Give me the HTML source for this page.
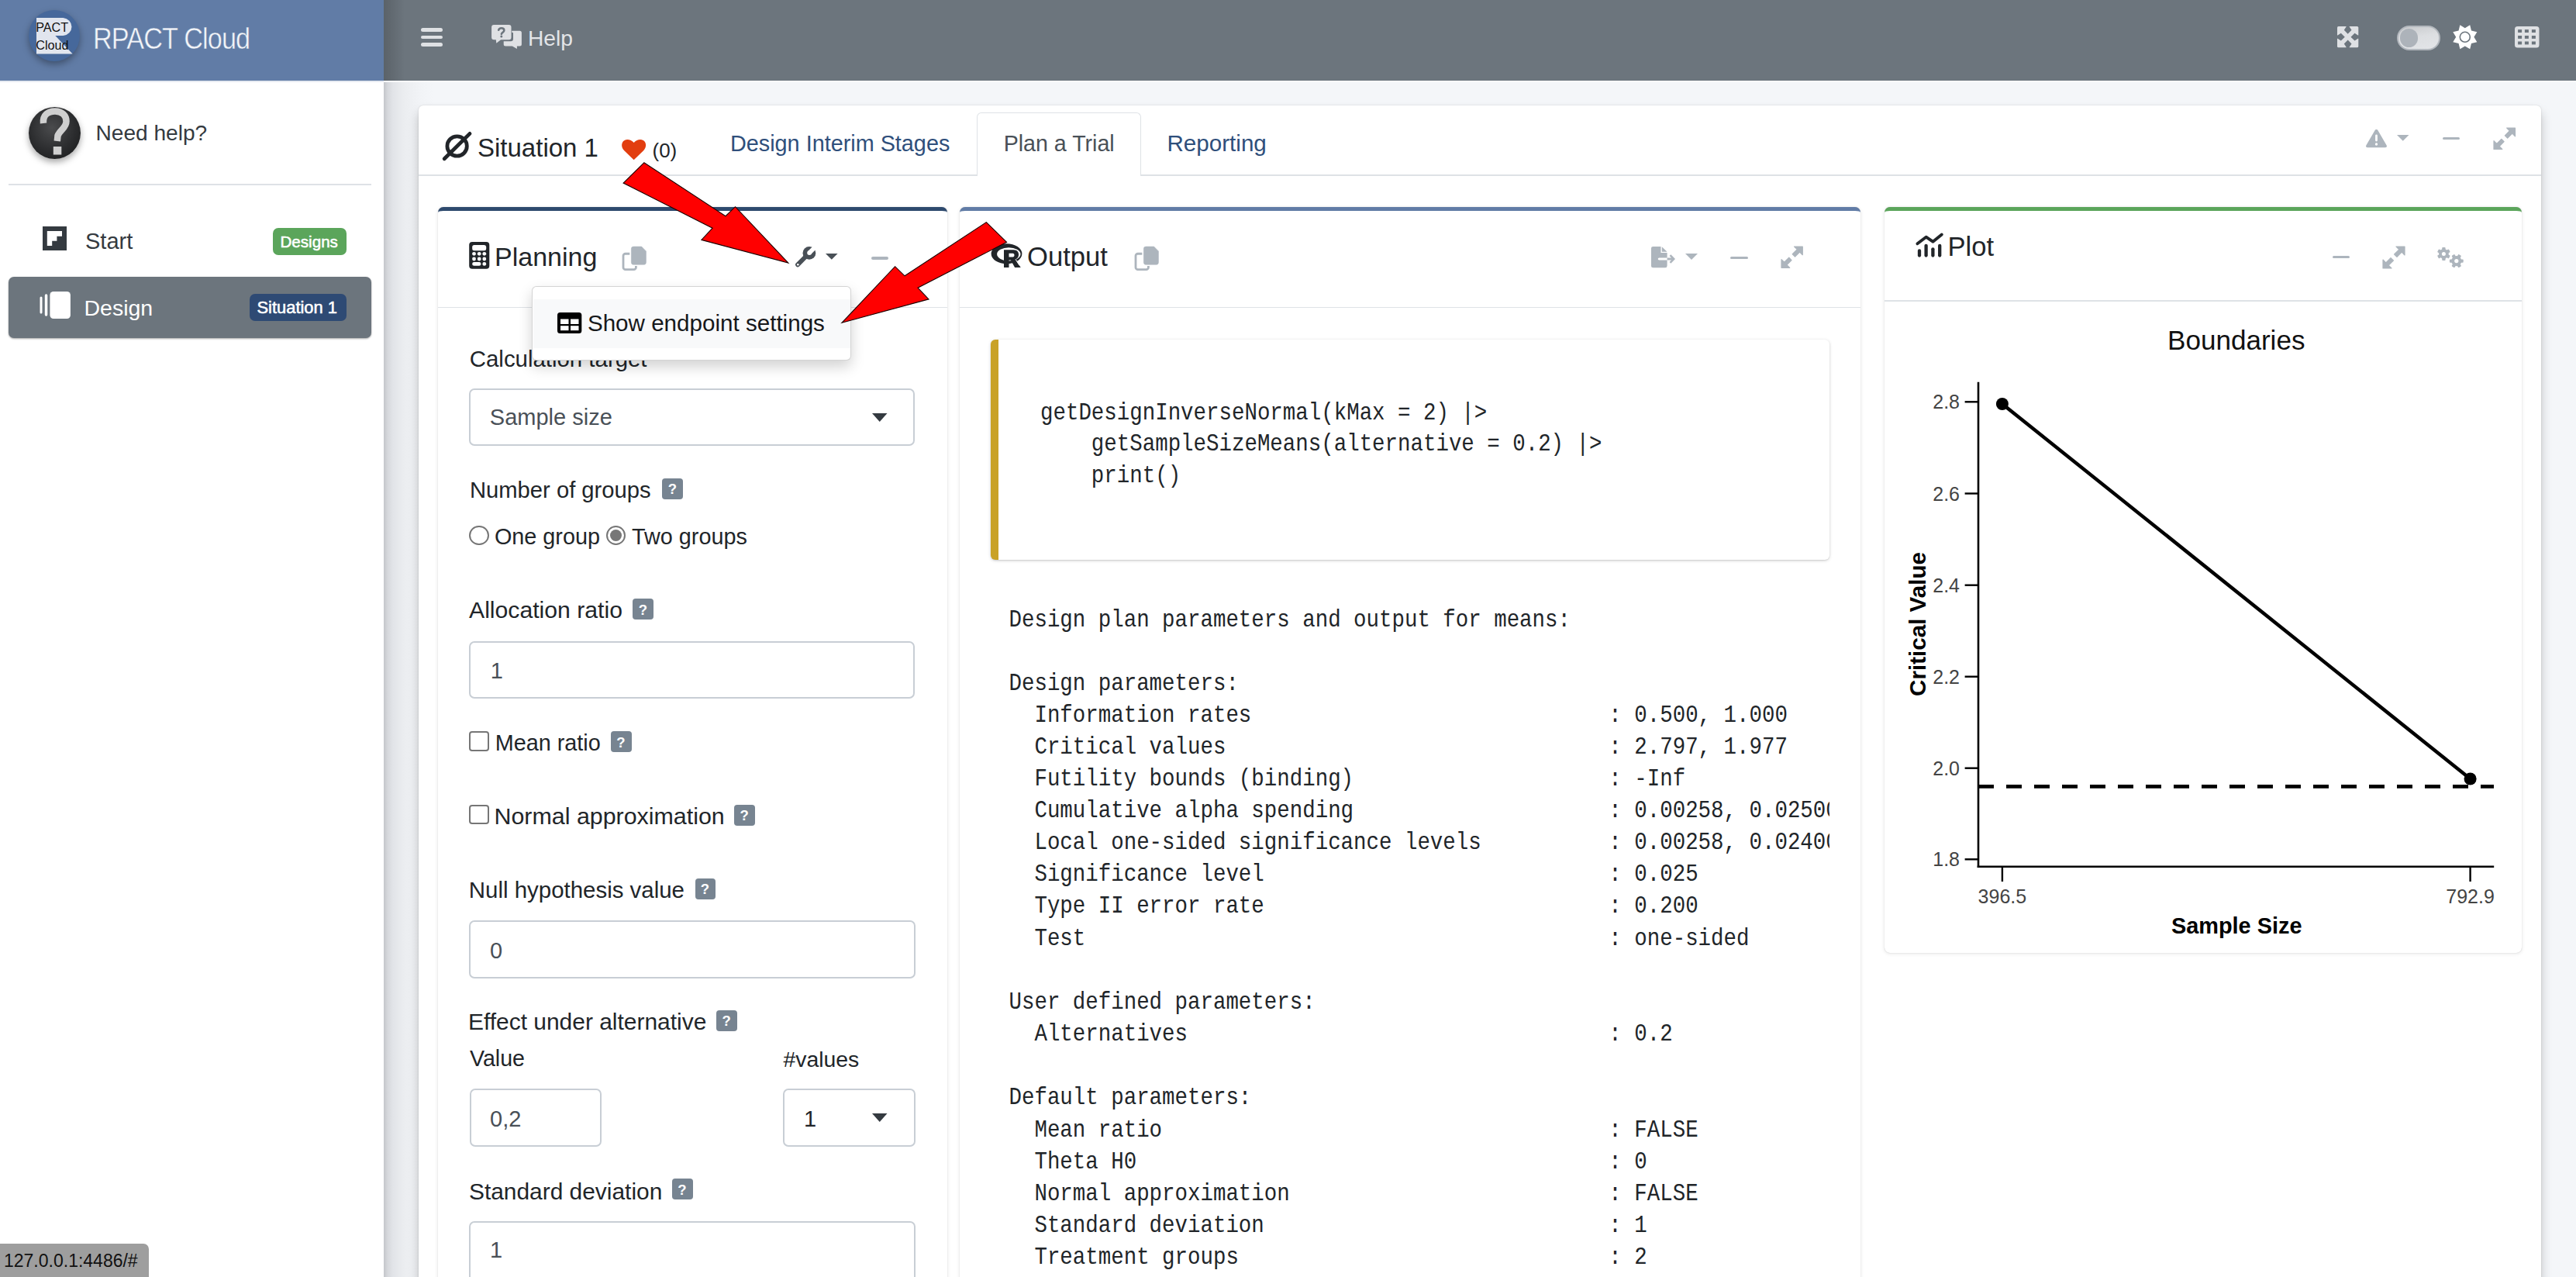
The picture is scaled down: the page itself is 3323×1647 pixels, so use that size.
<!DOCTYPE html>
<html><head><meta charset="utf-8"><title>RPACT Cloud</title>
<style>
html,body{margin:0;padding:0;width:3323px;height:1647px;overflow:hidden;background:#f4f6f9;font-family:"Liberation Sans",sans-serif;}
.t{position:absolute;line-height:1;white-space:nowrap;}
.r{position:absolute;box-sizing:border-box;}
svg.r{overflow:visible;}
pre{margin:0;}
</style></head><body>

<div class="r" style="left:495.0px;top:104.0px;width:65.0px;height:1543.0px;background:linear-gradient(to right,#c4c6ca 0px,#d6d8dc 5px,#e2e4e8 12px,#eaecef 24px,#eff1f4 38px,#f2f4f7 50px,#f4f6f9 65px)"></div>
<div class="r" style="left:495.0px;top:104.0px;width:2828.0px;height:2.0px;background:#fafbfc"></div>
<div class="r" style="left:495.0px;top:0.0px;width:2828.0px;height:104.0px;background:#6c757d"></div>
<div class="r" style="left:495.0px;top:0.0px;width:27.0px;height:104.0px;background:linear-gradient(to right,rgba(0,0,0,.16),rgba(0,0,0,0))"></div>
<div class="r" style="left:543.0px;top:36.0px;width:27.5px;height:4.5px;background:#dfe1e4;border-radius:2.5px"></div>
<div class="r" style="left:543.0px;top:45.5px;width:27.5px;height:4.5px;background:#dfe1e4;border-radius:2.5px"></div>
<div class="r" style="left:543.0px;top:55.0px;width:27.5px;height:4.5px;background:#dfe1e4;border-radius:2.5px"></div>
<svg class="r" style="left:630.0px;top:28.0px;width:48.0px;height:38.0px;" viewBox="630 28 48 38">
<path d="M652.5 39.8H670.4A2.5 2.5 0 0 1 672.9 42.3V56.9A2.5 2.5 0 0 1 670.4 59.4H666.9V62.9L660.8 59.4H652.2A2.5 2.5 0 0 1 649.7 56.9V53.2H659A3 3 0 0 0 662 50.2V42.3z" fill="#dfe1e4"/>
<path d="M659.5 39.8H661.3" stroke="#6c757d" stroke-width="0"/>
<path d="M637.1 31.9H656.5A3 3 0 0 1 659.5 34.9V48.3A3 3 0 0 1 656.5 51.3H646.1L640.3 55.7L639.8 51.3H637.1A3 3 0 0 1 634.1 48.3V34.9A3 3 0 0 1 637.1 31.9z" fill="#dfe1e4" stroke="#6c757d" stroke-width="1.6" paint-order="stroke"/>
<path d="M643.2 38.8C643.6 37.1 645 36.3 646.8 36.3C648.8 36.3 650.3 37.5 650.3 39.2C650.3 41.4 647.2 41.9 646.9 43.9" fill="none" stroke="#6c757d" stroke-width="2.6" stroke-linecap="round"/>
<circle cx="646.8" cy="47.1" r="1.5" fill="#6c757d"/>
</svg>
<div class="t" style="left:681.0px;top:34.8px;font-size:28.2px;color:#e3e5e8;font-weight:400;font-family:'Liberation Sans', sans-serif;">Help</div>
<svg class="r" style="left:3015.0px;top:34.0px;width:27.3px;height:27.3px;" viewBox="0 0 27.3 27.3"><rect x="0" y="0" width="27.3" height="27.3" rx="1.6" fill="#dfe1e4"/><g transform="rotate(0 13.65 13.65)"><polygon points="11.6,-1 11.6,0.6 8.8,4.8 13.65,9.8 18.5,4.8 15.7,0.6 15.7,-1" fill="#6c757d"/></g><g transform="rotate(90 13.65 13.65)"><polygon points="11.6,-1 11.6,0.6 8.8,4.8 13.65,9.8 18.5,4.8 15.7,0.6 15.7,-1" fill="#6c757d"/></g><g transform="rotate(180 13.65 13.65)"><polygon points="11.6,-1 11.6,0.6 8.8,4.8 13.65,9.8 18.5,4.8 15.7,0.6 15.7,-1" fill="#6c757d"/></g><g transform="rotate(270 13.65 13.65)"><polygon points="11.6,-1 11.6,0.6 8.8,4.8 13.65,9.8 18.5,4.8 15.7,0.6 15.7,-1" fill="#6c757d"/></g></svg>
<div class="r" style="left:3092.0px;top:33.0px;width:55.6px;height:31.8px;background:linear-gradient(170deg,#c8cacd 0%,#dcdee1 45%,#e3e5e8 100%);border:2px solid #b3b8be;border-radius:16px"></div>
<div class="r" style="left:3096.2px;top:37.4px;width:23.2px;height:23.2px;background:#adb3ba;border-radius:50%"></div>
<svg class="r" style="left:3162.7px;top:30.8px;width:33.6px;height:33.6px;" viewBox="0 0 33.6 33.6"><polygon points="16.80,5.20 23.23,1.28 25.00,8.60 32.32,10.37 28.40,16.80 32.32,23.23 25.00,25.00 23.23,32.32 16.80,28.40 10.37,32.32 8.60,25.00 1.28,23.23 5.20,16.80 1.28,10.37 8.60,8.60 10.37,1.28" fill="#ffffff"/><circle cx="16.8" cy="16.8" r="7.3" fill="#6c757d"/><circle cx="16.8" cy="16.8" r="5.7" fill="#ffffff"/></svg>
<svg class="r" style="left:3244.0px;top:34.0px;width:31.5px;height:27.5px;" viewBox="0 0 31.5 27.5">
<rect x="0" y="0" width="31.5" height="27.5" rx="3.5" fill="#dfe1e4"/>
<rect x="4.1" y="4.1" width="5" height="3.9" fill="#6c757d"/><rect x="4.1" y="12" width="5" height="3.9" fill="#6c757d"/><rect x="4.1" y="19.5" width="5" height="3.9" fill="#6c757d"/><rect x="12.9" y="4.1" width="5" height="3.9" fill="#6c757d"/><rect x="12.9" y="12" width="5" height="3.9" fill="#6c757d"/><rect x="12.9" y="19.5" width="5" height="3.9" fill="#6c757d"/><rect x="21.9" y="4.1" width="5" height="3.9" fill="#6c757d"/><rect x="21.9" y="12" width="5" height="3.9" fill="#6c757d"/><rect x="21.9" y="19.5" width="5" height="3.9" fill="#6c757d"/></svg>
<div class="r" style="left:0.0px;top:0.0px;width:495.0px;height:1647.0px;background:#ffffff"></div>
<div class="r" style="left:0.0px;top:0.0px;width:495.0px;height:104.0px;background:#617ca6"></div>
<div class="r" style="left:0.0px;top:104.0px;width:495.0px;height:2.0px;background:#e7ebf1"></div>
<div class="r" style="left:37.0px;top:13.0px;width:66.0px;height:66.0px;background:#46689b;border-radius:50%;box-shadow:0 4px 10px rgba(0,0,0,.35)"></div>
<svg class="r" style="left:46.6px;top:22.7px;width:46.6px;height:46.6px;" viewBox="0 0 46.6 46.6">
<path d="M0 0H34.5A12.1 11.6 0 0 1 34.5 23.1H24.3L46.6 46.6H0z" fill="#e1e5ee"/>
</svg>
<div class="t" style="left:46.2px;top:26.5px;font-size:16.2px;color:#111;font-weight:400;font-family:'Liberation Sans', sans-serif;">PACT</div>
<div class="t" style="left:46.2px;top:49.5px;font-size:16.2px;color:#111;font-weight:400;font-family:'Liberation Sans', sans-serif;">Cloud</div>
<div class="t" style="left:119.5px;top:30.9px;font-size:38.5px;color:#f3f5f9;font-weight:400;font-family:'Liberation Sans', sans-serif;letter-spacing:-1px;transform:scaleX(0.89);transform-origin:0 0;-webkit-text-stroke:0.5px #617ca6">RPACT Cloud</div>
<div class="r" style="left:37.0px;top:138.0px;width:67.0px;height:67.0px;background:radial-gradient(circle at 45% 40%,#4a4b4d 0%,#2b2c2e 55%,#151617 100%);border-radius:50%;box-shadow:0 4px 9px rgba(0,0,0,.35)"></div>
<svg class="r" style="left:0.0px;top:0.0px;width:120.0px;height:220.0px;" viewBox="0 0 120 220"><path d="M56 159C55 148 62 143.5 71 143.5C80 143.5 85.5 149 85.5 156.5C85.5 165 77 168 74.5 175L73.8 182" fill="none" stroke="#cfcfcf" stroke-width="8.5" stroke-linecap="butt"/><rect x="68.8" y="189" width="10.5" height="10.5" fill="#cfcfcf"/></svg>
<div class="t" style="left:123.5px;top:158.2px;font-size:28.1px;color:#343a40;font-weight:400;font-family:'Liberation Sans', sans-serif;">Need help?</div>
<div class="r" style="left:11.0px;top:237.0px;width:468.0px;height:2.0px;background:#dee2e6"></div>
<svg class="r" style="left:55.0px;top:292.0px;width:31.0px;height:31.0px;" viewBox="0 0 31 31"><rect width="31" height="31" fill="#343a40"/><path d="M5.8 6.1H25V12.7H18.4V18.7H12.2V25H5.8z" fill="#fff"/></svg>
<div class="t" style="left:110.0px;top:296.9px;font-size:29px;color:#343a40;font-weight:400;font-family:'Liberation Sans', sans-serif;">Start</div>
<div class="r" style="left:352.0px;top:294.0px;width:95.0px;height:35.0px;background:#5ba55b;border-radius:7px"></div>
<div class="t" style="left:361.5px;top:302.1px;font-size:20.6px;color:#ffffff;font-weight:400;font-family:'Liberation Sans', sans-serif;-webkit-text-stroke:0.55px #fff">Designs</div>
<div class="r" style="left:11.0px;top:357.0px;width:468.0px;height:79.0px;background:#6c757d;border-radius:7px;box-shadow:0 1px 3px rgba(0,0,0,.12),0 1px 2px rgba(0,0,0,.24)"></div>
<svg class="r" style="left:50.5px;top:376.0px;width:40.0px;height:35.0px;" viewBox="0 0 40 35"><rect x=".5" y="6.5" width="3" height="22" rx="1.5" fill="#fff"/><rect x="6.8" y="3.2" width="3.5" height="28.5" rx="1.7" fill="#fff"/><rect x="13.4" y="0" width="26.5" height="35" rx="4.5" fill="#fff"/></svg>
<div class="t" style="left:108.5px;top:382.5px;font-size:28.5px;color:#ffffff;font-weight:400;font-family:'Liberation Sans', sans-serif;">Design</div>
<div class="r" style="left:322.0px;top:379.0px;width:125.0px;height:34.5px;background:#2e4a74;border-radius:7px"></div>
<div class="t" style="left:331.5px;top:385.5px;font-size:21.9px;color:#ffffff;font-weight:400;font-family:'Liberation Sans', sans-serif;-webkit-text-stroke:0.55px #fff">Situation 1</div>
<div class="r" style="left:0.0px;top:1604.0px;width:192.0px;height:43.0px;background:#9e9e9e;border-top-right-radius:7px"></div>
<div class="t" style="left:5.0px;top:1615.3px;font-size:23px;color:#111;font-weight:400;font-family:'Liberation Sans', sans-serif;">127.0.0.1:4486/#</div>
<div class="r" style="left:540.0px;top:136.0px;width:2738.0px;height:1564.0px;background:#fff;border-radius:6px;box-shadow:0 0 2px rgba(0,0,0,.16),0 9px 14px rgba(0,0,0,.22)"></div>
<div class="r" style="left:540.0px;top:225.0px;width:2738.0px;height:2.0px;background:#dee2e6"></div>
<svg class="r" style="left:570.0px;top:170.0px;width:40.0px;height:40.0px;" viewBox="0 0 40 40"><circle cx="19.6" cy="18.5" r="12.7" fill="none" stroke="#212529" stroke-width="4.8"/><line x1="3.2" y1="34.7" x2="36" y2="2.4" stroke="#212529" stroke-width="4.8" stroke-linecap="round"/></svg>
<div class="t" style="left:616.0px;top:173.7px;font-size:33px;color:#212529;font-weight:400;font-family:'Liberation Sans', sans-serif;">Situation 1</div>
<svg class="r" style="left:802.0px;top:180.2px;width:31.3px;height:26.2px;" viewBox="0 0 32 27"><path d="M16 27L3.2 14.6C-1.2 10.3-1 3.6 3.6 1 7.4-1.1 12.4.2 16 4.2 19.6.2 24.6-1.1 28.4 1c4.6 2.6 4.8 9.3.4 13.6z" fill="#e23e0f"/></svg>
<div class="t" style="left:841.5px;top:180.5px;font-size:26px;color:#212529;font-weight:400;font-family:'Liberation Sans', sans-serif;">(0)</div>
<div class="t" style="left:942.0px;top:171.1px;font-size:28.8px;color:#2f4f7b;font-weight:400;font-family:'Liberation Sans', sans-serif;">Design Interim Stages</div>
<div class="r" style="left:1260.0px;top:144.8px;width:211.5px;height:82.2px;background:#fff;border:1.5px solid #dee2e6;border-bottom:none;border-top-left-radius:6px;border-top-right-radius:6px"></div>
<div class="t" style="left:1294.7px;top:171.3px;font-size:28.6px;color:#495057;font-weight:400;font-family:'Liberation Sans', sans-serif;">Plan a Trial</div>
<div class="t" style="left:1505.5px;top:170.4px;font-size:29.6px;color:#2f4f7b;font-weight:400;font-family:'Liberation Sans', sans-serif;">Reporting</div>
<svg class="r" style="left:3052.0px;top:166.8px;width:27.0px;height:23.2px;" viewBox="0 0 27 23.2"><path d="M13.5 0c.9 0 1.6.5 2 1.2l11.2 19.2c.8 1.4-.2 2.8-1.8 2.8H2.1C.5 23.2-.5 21.8.3 20.4L11.5 1.2C11.9.5 12.6 0 13.5 0z" fill="#adb5bd"/><rect x="12.1" y="6.5" width="2.8" height="9" rx="1.4" fill="#fff"/><circle cx="13.5" cy="19" r="1.7" fill="#fff"/></svg>
<svg class="r" style="left:3092.4px;top:173.8px;width:15.5px;height:7.8px;" viewBox="0 0 15.5 7.8"><path d="M0 0h15.5l-7.75 7.8z" fill="#adb5bd"/></svg>
<div class="r" style="left:3151.0px;top:176.8px;width:22.0px;height:3.5px;background:#adb5bd;border-radius:2px"></div>
<svg class="r" style="left:3217.0px;top:165.0px;width:27.5px;height:27.5px;" viewBox="0 0 28 28"><path d="M17 0h11v11l-3.8-3.8-6.2 6.2-3.4-3.4 6.2-6.2zM11 28H0V17l3.8 3.8 6.2-6.2 3.4 3.4-6.2 6.2z" fill="#adb5bd" stroke="#adb5bd" stroke-width="1.2" stroke-linejoin="round"/></svg>
<div class="r" style="left:564.7px;top:267.0px;width:656.9px;height:1433.0px;background:#fff;border-top:5.5px solid #2e4a6e;border-radius:7px;box-shadow:0 0 1px rgba(0,0,0,.22),0 1px 5px rgba(0,0,0,.11)"></div>
<div class="r" style="left:564.7px;top:395.5px;width:656.9px;height:1.5px;background:#dee2e6"></div>
<svg class="r" style="left:605.0px;top:312.0px;width:26.3px;height:34.7px;" viewBox="0 0 26.3 34.7"><rect x="0.2" y="0" width="26.1" height="34.7" rx="4" fill="#212529"/><rect x="4.2" y="4" width="18" height="7.2" rx="2.5" fill="#fff"/><circle cx="6.5" cy="15.3" r="2.4" fill="#fff"/><circle cx="13.2" cy="15.3" r="2.4" fill="#fff"/><circle cx="19.8" cy="15.3" r="2.4" fill="#fff"/><circle cx="6.5" cy="22" r="2.4" fill="#fff"/><circle cx="13.2" cy="22" r="2.4" fill="#fff"/><circle cx="19.8" cy="22" r="2.4" fill="#fff"/><circle cx="19.8" cy="28.4" r="2.4" fill="#fff"/><rect x="4.2" y="26" width="11.3" height="4.8" rx="2.4" fill="#fff"/></svg>
<div class="t" style="left:638.0px;top:314.2px;font-size:34px;color:#212529;font-weight:400;font-family:'Liberation Sans', sans-serif;">Planning</div>
<svg class="r" style="left:801.6px;top:318.0px;width:32.0px;height:32.0px;" viewBox="0 0 32 32"><path d="M10.3 9.25H4.8A2.8 2.8 0 0 0 2 12.05V26.9A2.8 2.8 0 0 0 4.8 29.7H15.6A2.8 2.8 0 0 0 18.4 26.9V25.1" fill="none" stroke="#adb5bd" stroke-width="2.8"/><path d="M15.2 0.1H25.6L31.4 5.9V20.4A2.8 2.8 0 0 1 28.6 23.2H15.2A2.8 2.8 0 0 1 12.4 20.4V2.9A2.8 2.8 0 0 1 15.2 0.1z" fill="#adb5bd" stroke="#adb5bd" stroke-width=".6" stroke-linejoin="round"/></svg>
<svg class="r" style="left:1020.0px;top:312.0px;width:40.0px;height:40.0px;" viewBox="1020 312 40 40"><circle cx="1043.9" cy="326.4" r="8.4" fill="#495057"/><line x1="1042" y1="328.3" x2="1029" y2="341.4" stroke="#495057" stroke-width="5.8" stroke-linecap="round"/><rect x="1041.1" y="311" width="5.6" height="15.3" fill="#fff" transform="rotate(45 1043.9 326.3)"/><circle cx="1044.1" cy="326.1" r="2.9" fill="#fff"/><circle cx="1029.3" cy="341.2" r="1.3" fill="#fff"/></svg>
<svg class="r" style="left:1065.0px;top:327.0px;width:15.6px;height:7.8px;" viewBox="0 0 16 8"><path d="M0 0h16l-8 8z" fill="#495057"/></svg>
<div class="r" style="left:1124.0px;top:331.0px;width:22.0px;height:3.5px;background:#adb5bd;border-radius:2px"></div>
<div class="t" style="left:605.8px;top:447.5px;font-size:29.4px;color:#212529;font-weight:400;font-family:'Liberation Sans', sans-serif;">Calculation target</div>
<div class="r" style="left:605.3px;top:501.2px;width:575.2px;height:74.3px;background:#fff;border:2px solid #c8ced5;border-radius:7px"></div>
<div class="t" style="left:631.8px;top:524.4px;font-size:29px;color:#495057;font-weight:400;font-family:'Liberation Sans', sans-serif;">Sample size</div>
<svg class="r" style="left:1125.0px;top:532.6px;width:19.5px;height:11.0px;" viewBox="0 0 19.5 11"><path d="M0 0h19.5l-9.75 11z" fill="#343a40"/></svg>
<div class="t" style="left:606.0px;top:617.5px;font-size:29.2px;color:#212529;font-weight:400;font-family:'Liberation Sans', sans-serif;">Number of groups</div>
<div class="r" style="left:854.4px;top:617.0px;width:26.5px;height:26.8px;background:#778491;border-radius:4px"></div>
<div class="t" style="left:861.7px;top:622.4px;font-size:18.5px;color:#fff;font-weight:700;font-family:'Liberation Sans', sans-serif;">?</div>
<div class="r" style="left:605.4px;top:677.5px;width:25.4px;height:25.4px;background:#fff;border:2.5px solid #767676;border-radius:50%"></div>
<div class="t" style="left:637.9px;top:678.2px;font-size:28.8px;color:#212529;font-weight:400;font-family:'Liberation Sans', sans-serif;">One group</div>
<div class="r" style="left:781.6px;top:677.5px;width:25.4px;height:25.4px;background:#fff;border:2.5px solid #767676;border-radius:50%"></div>
<div class="r" style="left:786.8px;top:682.7px;width:15.0px;height:15.0px;background:#777;border-radius:50%"></div>
<div class="t" style="left:815.0px;top:678.2px;font-size:28.8px;color:#212529;font-weight:400;font-family:'Liberation Sans', sans-serif;">Two groups</div>
<div class="t" style="left:605.0px;top:772.1px;font-size:30.2px;color:#212529;font-weight:400;font-family:'Liberation Sans', sans-serif;">Allocation ratio</div>
<div class="r" style="left:816.4px;top:772.4px;width:26.5px;height:26.8px;background:#778491;border-radius:4px"></div>
<div class="t" style="left:823.7px;top:777.8px;font-size:18.5px;color:#fff;font-weight:700;font-family:'Liberation Sans', sans-serif;">?</div>
<div class="r" style="left:605.3px;top:827.1px;width:575.2px;height:74.1px;background:#fff;border:2px solid #c8ced5;border-radius:7px"></div>
<div class="t" style="left:632.8px;top:851.4px;font-size:29px;color:#495057;font-weight:400;font-family:'Liberation Sans', sans-serif;">1</div>
<div class="r" style="left:605.4px;top:943.4px;width:25.4px;height:25.4px;background:#fff;border:2.5px solid #767676;border-radius:4px"></div>
<div class="t" style="left:638.7px;top:943.6px;font-size:28.8px;color:#212529;font-weight:400;font-family:'Liberation Sans', sans-serif;">Mean ratio</div>
<div class="r" style="left:788.0px;top:943.2px;width:26.5px;height:26.8px;background:#778491;border-radius:4px"></div>
<div class="t" style="left:795.3px;top:948.6px;font-size:18.5px;color:#fff;font-weight:700;font-family:'Liberation Sans', sans-serif;">?</div>
<div class="r" style="left:605.4px;top:1037.7px;width:25.4px;height:25.4px;background:#fff;border:2.5px solid #767676;border-radius:4px"></div>
<div class="t" style="left:637.5px;top:1037.3px;font-size:30.4px;color:#212529;font-weight:400;font-family:'Liberation Sans', sans-serif;">Normal approximation</div>
<div class="r" style="left:947.2px;top:1037.9px;width:26.5px;height:26.8px;background:#778491;border-radius:4px"></div>
<div class="t" style="left:954.5px;top:1043.3px;font-size:18.5px;color:#fff;font-weight:700;font-family:'Liberation Sans', sans-serif;">?</div>
<div class="t" style="left:604.8px;top:1132.9px;font-size:29.45px;color:#212529;font-weight:400;font-family:'Liberation Sans', sans-serif;">Null hypothesis value</div>
<div class="r" style="left:896.5px;top:1132.8px;width:26.5px;height:26.8px;background:#778491;border-radius:4px"></div>
<div class="t" style="left:903.8px;top:1138.2px;font-size:18.5px;color:#fff;font-weight:700;font-family:'Liberation Sans', sans-serif;">?</div>
<div class="r" style="left:605.0px;top:1187.0px;width:576.0px;height:75.0px;background:#fff;border:2px solid #c8ced5;border-radius:7px"></div>
<div class="t" style="left:632.0px;top:1211.6px;font-size:29px;color:#495057;font-weight:400;font-family:'Liberation Sans', sans-serif;">0</div>
<div class="t" style="left:604.0px;top:1302.6px;font-size:29.95px;color:#212529;font-weight:400;font-family:'Liberation Sans', sans-serif;">Effect under alternative</div>
<div class="r" style="left:924.3px;top:1302.9px;width:26.5px;height:26.8px;background:#778491;border-radius:4px"></div>
<div class="t" style="left:931.6px;top:1308.3px;font-size:18.5px;color:#fff;font-weight:700;font-family:'Liberation Sans', sans-serif;">?</div>
<div class="t" style="left:606.0px;top:1351.3px;font-size:28.6px;color:#212529;font-weight:400;font-family:'Liberation Sans', sans-serif;">Value</div>
<div class="t" style="left:1010.4px;top:1351.5px;font-size:28.4px;color:#212529;font-weight:400;font-family:'Liberation Sans', sans-serif;">#values</div>
<div class="r" style="left:605.9px;top:1404.2px;width:170.2px;height:75.3px;background:#fff;border:2px solid #c8ced5;border-radius:7px"></div>
<div class="t" style="left:632.0px;top:1428.9px;font-size:29px;color:#495057;font-weight:400;font-family:'Liberation Sans', sans-serif;">0,2</div>
<div class="r" style="left:1009.9px;top:1404.2px;width:171.1px;height:75.3px;background:#fff;border:2px solid #c8ced5;border-radius:7px"></div>
<div class="t" style="left:1037.0px;top:1428.9px;font-size:29px;color:#212529;font-weight:400;font-family:'Liberation Sans', sans-serif;">1</div>
<svg class="r" style="left:1124.8px;top:1435.5px;width:19.5px;height:11.0px;" viewBox="0 0 19.5 11"><path d="M0 0h19.5l-9.75 11z" fill="#343a40"/></svg>
<div class="t" style="left:605.0px;top:1521.6px;font-size:29.9px;color:#212529;font-weight:400;font-family:'Liberation Sans', sans-serif;">Standard deviation</div>
<div class="r" style="left:867.0px;top:1520.1px;width:26.5px;height:26.8px;background:#778491;border-radius:4px"></div>
<div class="t" style="left:874.3px;top:1525.5px;font-size:18.5px;color:#fff;font-weight:700;font-family:'Liberation Sans', sans-serif;">?</div>
<div class="r" style="left:605.0px;top:1574.8px;width:576.0px;height:125.7px;background:#fff;border:2px solid #c8ced5;border-radius:7px"></div>
<div class="t" style="left:632.0px;top:1598.1px;font-size:29px;color:#495057;font-weight:400;font-family:'Liberation Sans', sans-serif;">1</div>
<div class="r" style="left:1238.0px;top:267.0px;width:1162.0px;height:1433.0px;background:#fff;border-top:5.5px solid #617ca6;border-radius:7px;box-shadow:0 0 1px rgba(0,0,0,.22),0 1px 5px rgba(0,0,0,.11)"></div>
<div class="r" style="left:1238.0px;top:395.5px;width:1162.0px;height:1.5px;background:#dee2e6"></div>
<svg class="r" style="left:1277.5px;top:314.0px;width:41.0px;height:31.0px;" viewBox="0 0 41 31"><g transform="translate(-7.5 -9)"><path d="M28 9.2A19.9 13 0 1 0 28 35.2A19.9 13 0 1 0 28 9.2zM30.8 14.2A15.2 8.6 0 1 1 30.8 31.4A15.2 8.6 0 1 1 30.8 14.2z" fill="#212529" fill-rule="evenodd"/><path d="M24.5 17.2H37C41.5 17.2 43.6 20 43.6 23.3C43.6 26.4 41.8 28.6 39.6 29.5L46.2 40H38.6L33.4 30.4H31V40H24.5z" fill="#212529"/><path d="M39.6 29.5L44.5 37.3" stroke="#fff" stroke-width="1" fill="none"/><path d="M31 21.7H36C37.3 21.7 38 22.6 38 24.1C38 25.7 37.3 26.6 36 26.6H31z" fill="#fff"/></g></svg>
<div class="t" style="left:1325.0px;top:313.5px;font-size:34.6px;color:#212529;font-weight:400;font-family:'Liberation Sans', sans-serif;">Output</div>
<svg class="r" style="left:1463.0px;top:318.0px;width:32.0px;height:32.0px;" viewBox="0 0 32 32"><path d="M10.3 9.25H4.8A2.8 2.8 0 0 0 2 12.05V26.9A2.8 2.8 0 0 0 4.8 29.7H15.6A2.8 2.8 0 0 0 18.4 26.9V25.1" fill="none" stroke="#adb5bd" stroke-width="2.8"/><path d="M15.2 0.1H25.6L31.4 5.9V20.4A2.8 2.8 0 0 1 28.6 23.2H15.2A2.8 2.8 0 0 1 12.4 20.4V2.9A2.8 2.8 0 0 1 15.2 0.1z" fill="#adb5bd" stroke="#adb5bd" stroke-width=".6" stroke-linejoin="round"/></svg>
<svg class="r" style="left:2130.0px;top:318.0px;width:31.0px;height:27.2px;" viewBox="0 0 31 27.2"><path d="M0 2.5A2.5 2.5 0 0 1 2.5 0H12.5V8H20.6V14.5H10.2A1.5 1.5 0 0 0 10.2 17.5H20.6V24.7A2.5 2.5 0 0 1 18.1 27.2H2.5A2.5 2.5 0 0 1 0 24.7z" fill="#adb5bd"/><path d="M13.8 0.2L20.6 6.8H13.8z" fill="#adb5bd"/><path d="M20.6 14.5h5.4l-2.4-2.4 1.8-1.8 5.6 5.7-5.6 5.7-1.8-1.8 2.4-2.4h-5.4z" fill="#adb5bd"/></svg>
<svg class="r" style="left:2174.0px;top:326.6px;width:16.0px;height:8.0px;" viewBox="0 0 16 8"><path d="M0 0h16l-8 8z" fill="#adb5bd"/></svg>
<div class="r" style="left:2232.4px;top:330.5px;width:22.3px;height:3.5px;background:#adb5bd;border-radius:2px"></div>
<svg class="r" style="left:2298.0px;top:318.0px;width:27.3px;height:27.3px;" viewBox="0 0 28 28"><path d="M17 0h11v11l-3.8-3.8-6.2 6.2-3.4-3.4 6.2-6.2zM11 28H0V17l3.8 3.8 6.2-6.2 3.4 3.4-6.2 6.2z" fill="#adb5bd" stroke="#adb5bd" stroke-width="1.2" stroke-linejoin="round"/></svg>
<div class="r" style="left:1278.0px;top:438.0px;width:1081.5px;height:284.0px;background:#fff;border-radius:6px;border-left:10px solid #c9a227;box-shadow:0 1px 4px rgba(0,0,0,.16),0 1px 2px rgba(0,0,0,.1)"></div>
<div class="t" style="left:1342.0px;top:519.9px;font-size:27.45px;color:#212529;font-weight:400;font-family:'Liberation Mono', monospace;white-space:pre;transform:scaleY(1.11);transform-origin:0 21.03px">getDesignInverseNormal(kMax = 2) |&gt;</div>
<div class="t" style="left:1342.0px;top:560.4px;font-size:27.45px;color:#212529;font-weight:400;font-family:'Liberation Mono', monospace;white-space:pre;transform:scaleY(1.11);transform-origin:0 21.03px">    getSampleSizeMeans(alternative = 0.2) |&gt;</div>
<div class="t" style="left:1342.0px;top:601.0px;font-size:27.45px;color:#212529;font-weight:400;font-family:'Liberation Mono', monospace;white-space:pre;transform:scaleY(1.11);transform-origin:0 21.03px">    print()</div>
<div class="r" style="left:1238px;top:760px;width:1122px;height:900px;overflow:hidden">
<pre style="position:absolute;left:63.5px;top:19.34px;font-family:'Liberation Mono', monospace;font-size:27.45px;line-height:37.027px;color:#212529;transform:scaleY(1.11);transform-origin:0 0">Design plan parameters and output for means:

Design parameters:
  Information rates                            : 0.500, 1.000
  Critical values                              : 2.797, 1.977
  Futility bounds (binding)                    : -Inf
  Cumulative alpha spending                    : 0.00258, 0.02500
  Local one-sided significance levels          : 0.00258, 0.02400
  Significance level                           : 0.025
  Type II error rate                           : 0.200
  Test                                         : one-sided

User defined parameters:
  Alternatives                                 : 0.2

Default parameters:
  Mean ratio                                   : FALSE
  Theta H0                                     : 0
  Normal approximation                         : FALSE
  Standard deviation                           : 1
  Treatment groups                             : 2</pre>
</div>
<div class="r" style="left:2430.5px;top:267.0px;width:822.0px;height:962.0px;background:#fff;border-top:5.5px solid #5ba55b;border-radius:7px;box-shadow:0 0 1px rgba(0,0,0,.22),0 1px 5px rgba(0,0,0,.11)"></div>
<div class="r" style="left:2430.5px;top:387.0px;width:822.0px;height:1.5px;background:#dee2e6"></div>
<svg class="r" style="left:2470.5px;top:301.0px;width:35.5px;height:31.0px;" viewBox="0 0 35.5 31"><path d="M2.4 13.3L13.6 4.7 22.4 10.7 33.8 1.5" fill="none" stroke="#212529" stroke-width="3.9" stroke-linecap="round" stroke-linejoin="round"/><rect x="2.85" y="20.3" width="4.3" height="10.4" rx="2.15" fill="#212529"/><rect x="11.45" y="13.7" width="4.3" height="17.0" rx="2.15" fill="#212529"/><rect x="20.25" y="18.2" width="4.3" height="12.5" rx="2.15" fill="#212529"/><rect x="29.05" y="13.7" width="4.3" height="17.0" rx="2.15" fill="#212529"/></svg>
<div class="t" style="left:2512.5px;top:301.0px;font-size:34.6px;color:#212529;font-weight:400;font-family:'Liberation Sans', sans-serif;">Plot</div>
<div class="r" style="left:3008.9px;top:329.6px;width:22.3px;height:3.6px;background:#adb5bd;border-radius:2px"></div>
<svg class="r" style="left:3073.5px;top:317.7px;width:28.0px;height:28.0px;" viewBox="0 0 28 28"><path d="M17 0h11v11l-3.8-3.8-6.2 6.2-3.4-3.4 6.2-6.2zM11 28H0V17l3.8 3.8 6.2-6.2 3.4 3.4-6.2 6.2z" fill="#adb5bd" stroke="#adb5bd" stroke-width="1.2" stroke-linejoin="round"/></svg>
<svg class="r" style="left:3135.0px;top:310.0px;width:50.0px;height:40.0px;" viewBox="0 0 50 40"><g fill="#adb5bd"><circle cx="17.4" cy="17.4" r="6.3"/><rect x="-2.2" y="-8.5" width="4.4" height="3.7" rx="1" transform="translate(17.4 17.4) rotate(0)"/><rect x="-2.2" y="-8.5" width="4.4" height="3.7" rx="1" transform="translate(17.4 17.4) rotate(60)"/><rect x="-2.2" y="-8.5" width="4.4" height="3.7" rx="1" transform="translate(17.4 17.4) rotate(120)"/><rect x="-2.2" y="-8.5" width="4.4" height="3.7" rx="1" transform="translate(17.4 17.4) rotate(180)"/><rect x="-2.2" y="-8.5" width="4.4" height="3.7" rx="1" transform="translate(17.4 17.4) rotate(240)"/><rect x="-2.2" y="-8.5" width="4.4" height="3.7" rx="1" transform="translate(17.4 17.4) rotate(300)"/></g><circle cx="17.4" cy="17.4" r="2.5" fill="#fff"/><g fill="#adb5bd"><circle cx="33.8" cy="26.6" r="6.6"/><rect x="-2.2" y="-8.9" width="4.4" height="3.8000000000000007" rx="1" transform="translate(33.8 26.6) rotate(30)"/><rect x="-2.2" y="-8.9" width="4.4" height="3.8000000000000007" rx="1" transform="translate(33.8 26.6) rotate(90)"/><rect x="-2.2" y="-8.9" width="4.4" height="3.8000000000000007" rx="1" transform="translate(33.8 26.6) rotate(150)"/><rect x="-2.2" y="-8.9" width="4.4" height="3.8000000000000007" rx="1" transform="translate(33.8 26.6) rotate(210)"/><rect x="-2.2" y="-8.9" width="4.4" height="3.8000000000000007" rx="1" transform="translate(33.8 26.6) rotate(270)"/><rect x="-2.2" y="-8.9" width="4.4" height="3.8000000000000007" rx="1" transform="translate(33.8 26.6) rotate(330)"/></g><circle cx="33.8" cy="26.6" r="2.6" fill="#fff"/></svg>
<div class="t" style="left:2796.0px;top:421.2px;font-size:35.1px;color:#111;font-weight:400;font-family:'Liberation Sans', sans-serif;">Boundaries</div>
<svg class="r" style="left:0;top:0;width:3323px;height:1647px" viewBox="0 0 3323 1647"><line x1="2552" y1="492.8" x2="2552" y2="1119" stroke="#000" stroke-width="2.6"/><line x1="2550.7" y1="1117.7" x2="3217.2" y2="1117.7" stroke="#000" stroke-width="2.6"/><line x1="2534.6" y1="518.3" x2="2552" y2="518.3" stroke="#000" stroke-width="2.4"/><text x="2528" y="527.3" font-size="25" text-anchor="end" fill="#444" font-family="Liberation Sans">2.8</text><line x1="2534.6" y1="636.5" x2="2552" y2="636.5" stroke="#000" stroke-width="2.4"/><text x="2528" y="645.5" font-size="25" text-anchor="end" fill="#444" font-family="Liberation Sans">2.6</text><line x1="2534.6" y1="754.7" x2="2552" y2="754.7" stroke="#000" stroke-width="2.4"/><text x="2528" y="763.7" font-size="25" text-anchor="end" fill="#444" font-family="Liberation Sans">2.4</text><line x1="2534.6" y1="872.7" x2="2552" y2="872.7" stroke="#000" stroke-width="2.4"/><text x="2528" y="881.7" font-size="25" text-anchor="end" fill="#444" font-family="Liberation Sans">2.2</text><line x1="2534.6" y1="990.7" x2="2552" y2="990.7" stroke="#000" stroke-width="2.4"/><text x="2528" y="999.7" font-size="25" text-anchor="end" fill="#444" font-family="Liberation Sans">2.0</text><line x1="2534.6" y1="1108.3" x2="2552" y2="1108.3" stroke="#000" stroke-width="2.4"/><text x="2528" y="1117.3" font-size="25" text-anchor="end" fill="#444" font-family="Liberation Sans">1.8</text><line x1="2582.9" y1="1117.7" x2="2582.9" y2="1137" stroke="#000" stroke-width="2.4"/><text x="2582.9" y="1165.1" font-size="25" text-anchor="middle" fill="#444" font-family="Liberation Sans">396.5</text><line x1="3186.6" y1="1117.7" x2="3186.6" y2="1137" stroke="#000" stroke-width="2.4"/><text x="3186.6" y="1165.1" font-size="25" text-anchor="middle" fill="#444" font-family="Liberation Sans">792.9</text><text x="2885.2" y="1204" font-size="28.9" font-weight="700" text-anchor="middle" fill="#000" font-family="Liberation Sans">Sample Size</text><text transform="translate(2483.8 805) rotate(-90)" x="0" y="0" font-size="29.6" font-weight="700" text-anchor="middle" fill="#000" font-family="Liberation Sans">Critical Value</text><line x1="2552" y1="1014.4" x2="3217" y2="1014.4" stroke="#000" stroke-width="4.6" stroke-dasharray="20 16"/><line x1="2582.9" y1="521" x2="3186.6" y2="1004.5" stroke="#000" stroke-width="4.6"/><circle cx="2582.9" cy="521" r="8" fill="#000"/><circle cx="3186.6" cy="1004.5" r="8" fill="#000"/></svg>
<div class="r" style="left:686.0px;top:368.8px;width:412.0px;height:96.7px;background:#fff;border:1.5px solid rgba(0,0,0,.17);border-radius:6px;box-shadow:0 8px 18px rgba(0,0,0,.18)"></div>
<div class="r" style="left:687.5px;top:386.0px;width:409.0px;height:63.0px;background:#f8f9fa"></div>
<svg class="r" style="left:718.7px;top:403.0px;width:31.3px;height:27.0px;" viewBox="0 0 31.3 27"><rect width="31.3" height="27" rx="3.5" fill="#000"/><rect x="4" y="8.5" width="10.5" height="6.5" fill="#fff"/><rect x="17" y="8.5" width="10.5" height="6.5" fill="#fff"/><rect x="4" y="17.2" width="10.5" height="6" fill="#fff"/><rect x="17" y="17.2" width="10.5" height="6" fill="#fff"/></svg>
<div class="t" style="left:757.9px;top:401.9px;font-size:29.6px;color:#16181b;font-weight:400;font-family:'Liberation Sans', sans-serif;">Show endpoint settings</div>
<svg class="r" style="left:0;top:0;width:3323px;height:1647px" viewBox="0 0 3323 1647"><polygon points="830.8,209.8 804.1,236 919.1,294.2 904.9,309.4 1016.8,339.1 948.5,266.7 936,278.7" fill="#ff0000" stroke="#1a0000" stroke-width="1.1" stroke-linejoin="miter"/><polygon points="1272.3,286.7 1298.6,312.3 1184,371.2 1198,385.9 1086,416.3 1154.6,343.7 1167.1,355.8" fill="#ff0000" stroke="#1a0000" stroke-width="1.1" stroke-linejoin="miter"/></svg>
<!--MAIN-->
</body></html>
